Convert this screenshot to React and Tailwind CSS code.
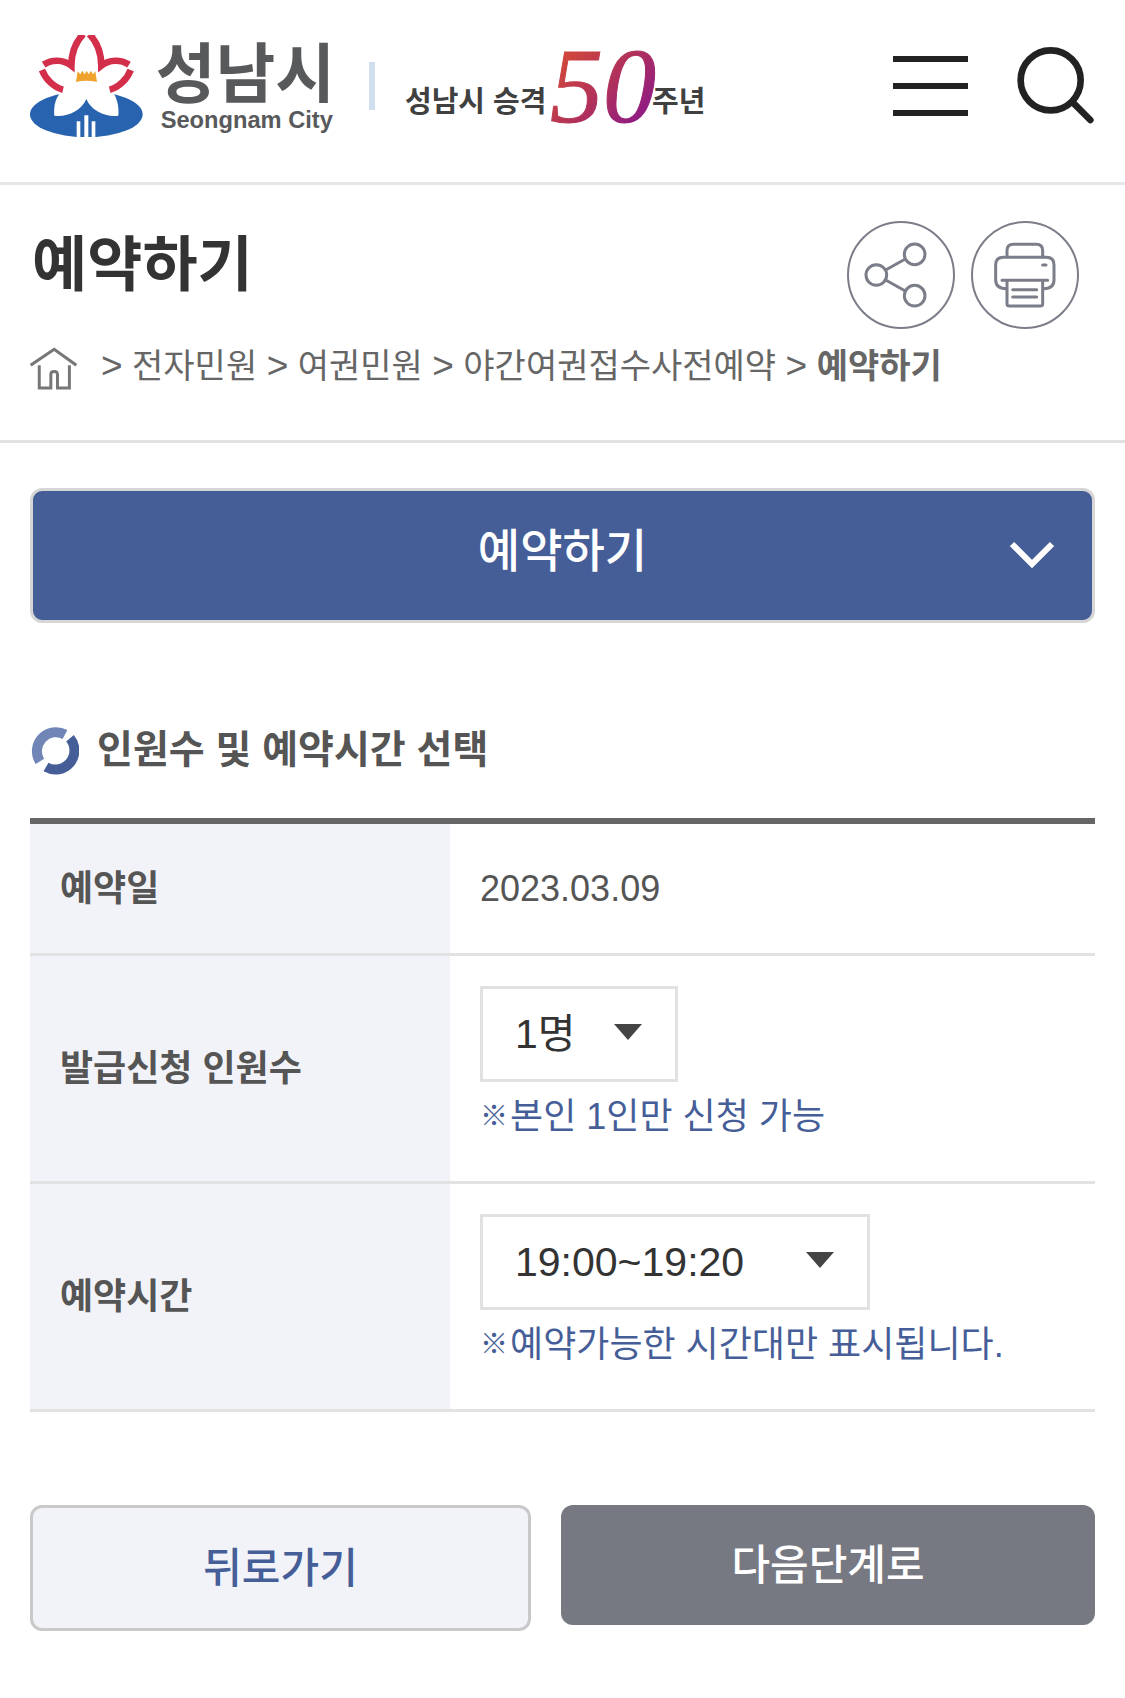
import React from "react";

function CityLogo() {
  return (
    <svg viewBox="90 105 909 306" className="h-[102px] w-[303px] shrink-0" role="img" aria-label="성남시 Seongnam City">
      <ellipse cx="259" cy="343" rx="169" ry="69" fill="#2763ae" />
      <path
        d="M259 113C236 128 219 160 216 190C190 174 154 178 133 195C133 216 156 250 192 268C168 286 160 316 163 347C200 352 243 334 259 297C275 334 318 352 355 347C358 316 350 286 330 266C362 250 386 216 386 195C364 178 328 174 302 190C299 160 282 128 259 113Z"
        fill="#fff"
      />
      <g fill="none" stroke="#d32f4b" strokeWidth="20">
        <path d="M250 102C227 126 214 160 214 197C190 178 156 178 131 194" />
        <path d="M268 102C291 126 304 160 304 197C328 178 362 178 387 194" />
        <path d="M126 210C136 236 160 262 189 269" />
        <path d="M392 210C382 236 358 262 329 269" />
      </g>
      <path d="M228 246L233 214L241 223L247 212L254 223L260 212L266 223L273 212L279 223L286 214L291 246Q259 238 228 246Z" fill="#f0a22e" />
      <path d="M230 364h11v47h-11zM253 346h12v65h-12zM275 364h11v47h-11z" fill="#fff" />
      <text x="467" y="291" fontSize="195" className="font-bold" fill="#58595b">성남시</text>
      <text x="482" y="384" fontSize="71" className="font-bold" fill="#58595b">Seongnam City</text>
    </svg>
  );
}

function AnniversaryLogo() {
  return (
    <svg viewBox="0 0 300 75" className="h-[75px] w-[300px] shrink-0 overflow-visible" role="img" aria-label="성남시 승격 50주년">
      <defs>
        <linearGradient id="fifty" gradientUnits="userSpaceOnUse" x1="160" y1="10" x2="236" y2="75">
          <stop offset="0" stopColor="#cf463c" />
          <stop offset="0.5" stopColor="#b0305c" />
          <stop offset="1" stopColor="#8c1a86" />
        </linearGradient>
      </defs>
      <text x="0" y="63" fontSize="29" className="font-bold" fill="#404040">성남시 승격</text>
      <text x="145" y="73" fontSize="106" fontStyle="italic" fontFamily="Liberation Serif, serif" fill="url(#fifty)" stroke="url(#fifty)" strokeWidth="1">50</text>
      <text x="247" y="63" fontSize="29" className="font-bold" fill="#404040">주년</text>
    </svg>
  );
}

function SearchIcon() {
  return (
    <svg viewBox="591 141 234 231" className="h-[77px] w-[78px]" fill="none" stroke="#222" strokeLinecap="round">
      <circle cx="692" cy="241" r="90" strokeWidth="20" />
      <path d="M759 308L811 360" strokeWidth="20" />
    </svg>
  );
}

function ShareIcon() {
  return (
    <svg viewBox="80 663 324 324" className="size-[108px]" fill="none" stroke="#7b7e89" strokeWidth="9">
      <circle cx="242" cy="825" r="159" strokeWidth="6" />
      <circle cx="168" cy="825" r="31" />
      <circle cx="283" cy="763" r="31" />
      <circle cx="283" cy="887" r="31" />
      <path d="M196 810L255 777M196 840L255 873" />
    </svg>
  );
}

function PrintIcon() {
  return (
    <svg viewBox="452 663 324 324" className="size-[108px]" fill="none" stroke="#7b7e89" strokeWidth="9" strokeLinecap="round" strokeLinejoin="round">
      <circle cx="614" cy="825" r="159" strokeWidth="6" />
      <path d="M560 770V752Q560 733 579 733H648Q667 733 667 752V770" />
      <path d="M558 866Q526 866 526 840V795Q526 772 549 772H678Q701 772 701 795V840Q701 866 670 866" />
      <path d="M545 841H682M560 843V911Q560 918 567 918H660Q667 918 667 911V843M577 869H649M577 891H649M667 795H677" />
    </svg>
  );
}

function HomeIcon() {
  return (
    <svg viewBox="93 440 142 128" className="h-[43px] w-[47px] shrink-0" fill="none" stroke="#777" strokeWidth="9">
      <path d="M95 494L166 446L233 494" />
      <path d="M121 494V563H156V522Q156 513 166 513Q176 513 176 522V563H212V494" />
    </svg>
  );
}

function RingIcon() {
  return (
    <svg viewBox="0 0 49 49" className="size-[49px] shrink-0" fill="none" strokeWidth="10">
      <path d="M9.9 35.4A19 19 0 0 1 35 8.5" stroke="#7186b6" />
      <path d="M40 12.3A19 19 0 0 1 16 41" stroke="#465e98" />
    </svg>
  );
}

function SelectBox({ id, width, children }) {
  return (
    <div className={"relative " + width}>
      <select
        id={id}
        className="block h-24 w-full appearance-none rounded-none border-[3px] border-[#e1e1e1] bg-white pl-8 text-[41px] text-[#333]"
      >
        {children}
      </select>
      <svg viewBox="0 0 28 16" className="pointer-events-none absolute top-[38px] right-9 h-4 w-7" fill="#444">
        <path d="M0 0H28L14 16Z" />
      </svg>
    </div>
  );
}

function Row({ label, htmlFor, children }) {
  return (
    <tr>
      <th scope="row" className="border-b-[3px] border-[#e2e2e2] bg-[#f2f3f8] px-[30px] text-left align-middle font-bold">
        {htmlFor ? <label htmlFor={htmlFor}>{label}</label> : label}
      </th>
      <td className="border-b-[3px] border-[#e2e2e2] p-[30px]">{children}</td>
    </tr>
  );
}

function Note({ children }) {
  return (
    <p className="flex items-center gap-0.5 leading-[69px] text-[#465e98]">
      <span className="text-[28px] font-bold">※</span>
      <span>{children}</span>
    </p>
  );
}

export default function App() {
  const crumbs = ["전자민원", "여권민원", "야간여권접수사전예약"];
  return (
    <div className="bg-white pb-16 font-['Liberation_Sans','Noto_Sans_CJK_KR',sans-serif] text-[36px] text-[#555]">
      <header className="flex items-start border-b-[3px] border-[#e5e7ea] px-[30px] pt-[35px] pb-[45px]">
        <a href="#home"><CityLogo /></a>
        <span className="mt-[27px] ml-9 h-12 w-1.5 bg-[#cfdfee]" />
        <a href="#anniversary" className="mt-3.5 ml-[30px]"><AnniversaryLogo /></a>
        <div className="mt-3 ml-auto flex items-start gap-[49px]">
          <button type="button" aria-label="전체메뉴" className="mt-[9px] flex h-[60px] w-[75px] flex-col justify-between">
            <span className="h-1.5 w-full bg-[#222]" />
            <span className="h-1.5 w-full bg-[#222]" />
            <span className="h-1.5 w-full bg-[#222]" />
          </button>
          <button type="button" aria-label="검색"><SearchIcon /></button>
        </div>
      </header>

      <section className="border-b-[3px] border-[#e2e2e2] px-[30px] pt-9 pb-12">
        <div className="flex items-start justify-between">
          <h1 className="pl-0.5 text-[60px] leading-[90px] font-bold text-[#333]">예약하기</h1>
          <div className="mr-4 flex gap-4">
            <button type="button" aria-label="공유"><ShareIcon /></button>
            <button type="button" aria-label="인쇄"><PrintIcon /></button>
          </div>
        </div>
        <nav aria-label="현재 위치" className="mt-[15px] flex h-12 items-center text-[34px] leading-[48px] text-[#666]">
          <a href="#home" aria-label="홈" className="mr-6"><HomeIcon /></a>
          <span className="pb-1 whitespace-pre">
            {crumbs.map((c) => (
              <React.Fragment key={c}><span className="text-[37px]">&gt;</span>{" "}<a href="#crumb">{c}</a>{" "}</React.Fragment>
            ))}
            <span className="text-[37px]">&gt;</span>{" "}<strong>예약하기</strong>
          </span>
        </nav>
      </section>

      <main className="px-[30px] pt-[45px]">
        <button type="button" className="relative block h-[135px] w-full rounded-xl border-[3px] border-[#d6d6d6] bg-[#465e98] pb-2 text-[46px] font-medium text-white">
          예약하기
          <svg viewBox="0 0 44 28" className="absolute top-[50px] right-[38px] h-7 w-11" fill="none" stroke="#fff" strokeWidth="6">
            <path d="M2 3L22 23L42 3" />
          </svg>
        </button>

        <h2 className="mt-[95px] flex items-center gap-[18px] text-[39px] leading-[64px] font-bold">
          <RingIcon />
          인원수 및 예약시간 선택
        </h2>

        <table className="mt-9 w-full table-fixed border-separate border-spacing-0 border-t-[6px] border-[#666] leading-[69px]">
          <colgroup>
            <col className="w-[420px]" />
            <col />
          </colgroup>
          <tbody>
            <Row label="예약일">2023.03.09</Row>
            <Row label="발급신청 인원수" htmlFor="people">
              <SelectBox id="people" width="w-[198px]"><option>1명</option></SelectBox>
              <Note>본인 1인만 신청 가능</Note>
            </Row>
            <Row label="예약시간" htmlFor="time">
              <SelectBox id="time" width="w-[390px]"><option>19:00~19:20</option></SelectBox>
              <Note>예약가능한 시간대만 표시됩니다.</Note>
            </Row>
          </tbody>
        </table>

        <div className="mt-[93px] grid grid-cols-[501fr_534fr] items-start gap-[30px] text-[42px] font-medium">
          <button type="button" className="h-[126px] rounded-xl border-[3px] border-[#c9c9c9] bg-[#f2f3f8] text-[#465e98]">뒤로가기</button>
          <button type="button" className="h-[120px] rounded-xl bg-[#767882] text-white">다음단계로</button>
        </div>
      </main>
    </div>
  );
}
